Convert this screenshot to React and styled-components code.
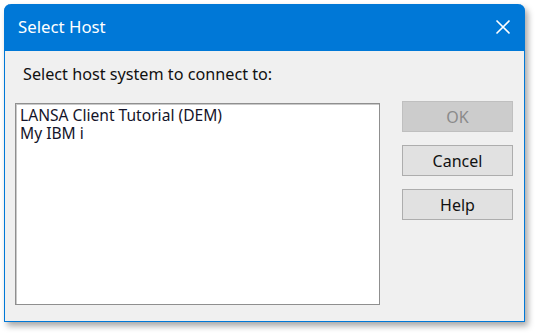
import React from "react";
import styled, { createGlobalStyle } from "styled-components";

const Global = createGlobalStyle`
  html, body { margin: 0; padding: 0; background: #ffffff; }
  body { font-family: "Noto Sans", "Open Sans", sans-serif; }
`;

const Page = styled.div`
  width: 538px;
  height: 335px;
  padding: 4px 0 0 4px;
  box-sizing: border-box;
`;

const Window = styled.div`
  width: 521px;
  height: 318px;
  box-sizing: border-box;
  display: flex;
  flex-direction: column;
  background: #f0f0f0;
  border: 1px solid #0078d7;
  border-top: none;
  border-radius: 7px 7px 0 0;
  box-shadow: 3px 4px 6px rgba(0, 0, 0, 0.35);
`;

const TitleBar = styled.div`
  height: 47px;
  flex: none;
  margin: 0 -1px;
  background: #0078d7;
  border-radius: 7px 7px 0 0;
  display: flex;
  align-items: center;
  justify-content: space-between;
  padding: 0 14px 0 14px;
  color: #ffffff;
`;

const Title = styled.span`
  font-size: 16.8px;
  line-height: 20px;
  padding-bottom: 1px;
`;

const CloseIcon = styled.svg`
  width: 16px;
  height: 16px;
  display: block;
  margin-bottom: 2px;
`;

const Body = styled.div`
  flex: 1;
  display: flex;
  flex-direction: column;
  padding: 12px 11px 16px 10px;
  min-height: 0;
`;

const Label = styled.div`
  height: 40px;
  padding-left: 8px;
  font-size: 16.2px;
  line-height: 22px;
  color: #111111;
`;

const Main = styled.div`
  flex: 1;
  display: flex;
  gap: 22px;
  min-height: 0;
`;

const ListBox = styled.div`
  flex: 1;
  background: #ffffff;
  border: 1px solid #8f8f8f;
  box-shadow: inset 1px 1px 0 #c9c9c9;
  padding: 2px 4px;
  display: flex;
  flex-direction: column;
`;

const ListItem = styled.div`
  font-size: 15.6px;
  line-height: 18px;
  color: #14142a;
  white-space: nowrap;
`;

const Buttons = styled.div`
  width: 111px;
  display: flex;
  flex-direction: column;
  gap: 13px;
  margin-top: -2px;
`;

const Button = styled.button`
  height: 31px;
  width: 111px;
  box-sizing: border-box;
  font-family: inherit;
  font-size: 16px;
  background: ${(p) => (p.disabled ? "#cccccc" : "#e1e1e1")};
  border: 1px solid ${(p) => (p.disabled ? "#bfbfbf" : "#adadad")};
  color: ${(p) => (p.disabled ? "#8a8a8a" : "#111111")};
  padding: 0;
  border-radius: 0;
`;

export default function App() {
  return (
    <>
      <Global />
      <Page>
        <Window>
          <TitleBar>
            <Title>Select Host</Title>
            <CloseIcon viewBox="0 0 16 16">
              <path d="M1.5 1.5 L14.5 14.5 M14.5 1.5 L1.5 14.5" stroke="#ffffff" strokeWidth="1.6" fill="none" />
            </CloseIcon>
          </TitleBar>
          <Body>
            <Label>Select host system to connect to:</Label>
            <Main>
              <ListBox>
                <ListItem>LANSA Client Tutorial (DEM)</ListItem>
                <ListItem>My IBM i</ListItem>
              </ListBox>
              <Buttons>
                <Button disabled>OK</Button>
                <Button>Cancel</Button>
                <Button>Help</Button>
              </Buttons>
            </Main>
          </Body>
        </Window>
      </Page>
    </>
  );
}
